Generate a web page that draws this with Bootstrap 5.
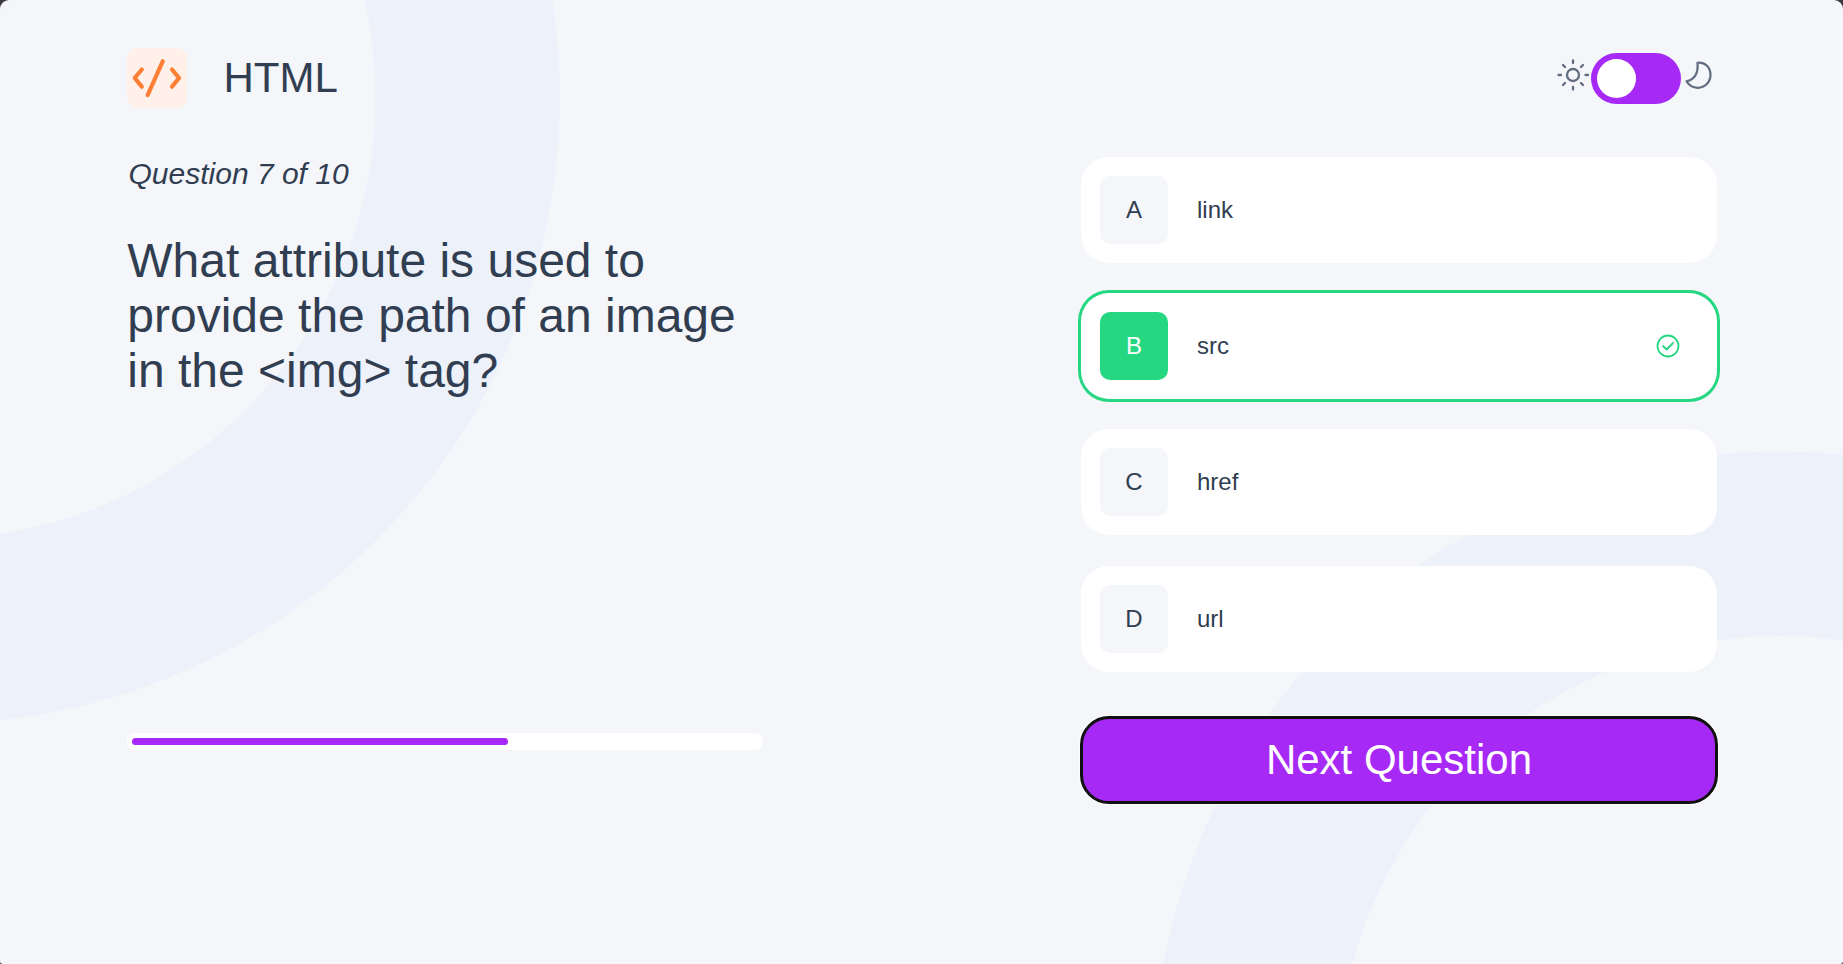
<!DOCTYPE html>
<html lang="en">
<head>
<meta charset="utf-8">
<meta name="viewport" content="width=device-width, initial-scale=1">
<title>Frontend Quiz</title>
<link rel="stylesheet" href="https://cdn.jsdelivr.net/npm/bootstrap@5.3.0/dist/css/bootstrap.min.css">
<style>
  html { background: #3b3b3f; }
  body {
    font-family: "Liberation Sans", Arial, sans-serif;
    color: #313e51;
    background: transparent;
    line-height: normal;
  }
  .quiz-page { height: 100vh; padding-left: 1px; background: #f4f6fa; border-radius: 9px 9px 3px 3px; }
  .rings { z-index: 0; }
  .quiz-shell { width: 1590px; z-index: 1; }
  .quiz-header { height: 157px; padding: 48px 1px 0 0; }
  .topic-icon { width: 60px; height: 60px; border-radius: 10px; background: #fff1e9; }
  .topic-name { font-size: 42px; line-height: 48px; margin-left: 36.5px; }
  .theme-switch { padding-top: 5px; }
  .switch-track { width: 90px; height: 51px; border-radius: 26px; background: #a729f5; padding: 6px; }
  .switch-thumb { width: 39px; height: 39px; }
  .panel { width: 636px; }
  .counter { font-size: 30px; line-height: 34px; padding-left: 1.5px; }
  .question { font-size: 48px; line-height: 55px; margin-top: 42px; padding-left: .3px; }
  .meter { height: 17px; border-radius: 8px; padding: 5px; margin-top: 335px; }
  .meter-fill { height: 7px; border-radius: 4px; background: #a729f5; }
  .options { gap: 30.2px; }
  .option { height: 106px; border-radius: 28px; padding: 0 37px 0 19px; border: 0; font-size: 24px; color: #313e51; }
  .option.correct { box-shadow: 0 0 0 3px #26d782; }
  .letter { width: 68px; height: 68px; border-radius: 10px; background: #f4f6fa; margin-right: 29px; }
  .correct .letter { background: #26d782; color: #fff; }
  .next-btn, .next-btn:hover {
    height: 86px; margin-top: 45.4px; border-radius: 28px; border: 0;
    font-size: 42px; line-height: 48px; color: #fff; background: #a729f5;
    outline: 3px solid #101010; outline-offset: -2px; box-shadow: 0 0 0 2px #fff;
  }
</style>
</head>
<body>
<div class="quiz-page position-relative overflow-hidden">
  <svg class="rings position-absolute top-0 start-0 w-100 h-100" fill="none" stroke="#ecf1fa" stroke-width="184.5" aria-hidden="true">
    <circle cx="-66.5" cy="97" r="534.2"/>
    <circle cx="1779.5" cy="1078" r="534.2"/>
  </svg>
  <div class="quiz-shell position-relative mx-auto">
    <header class="quiz-header d-flex justify-content-between align-items-start">
      <div class="d-flex align-items-center">
        <span class="topic-icon d-flex">
          <svg width="60" height="60" viewBox="0 0 60 60" fill="none" stroke="#ff7e35" stroke-width="4.2" stroke-linecap="round" stroke-linejoin="round" aria-hidden="true">
            <path d="M14.800 21.500 7.700 30l7.100 8.700M45 21.500l7.100 8.500-7.100 8.700M35.700 13.300 20.700 47"/>
          </svg>
        </span>
        <span class="topic-name">HTML</span>
      </div>
      <div class="theme-switch d-flex align-items-start">
        <svg width="34" height="51" viewBox="0 0 34 51" fill="none" stroke="#626c7f" stroke-width="2.3" stroke-linecap="round" aria-hidden="true">
          <circle cx="16" cy="22" r="6"/>
          <path d="M16 7.500V10M16 34v2.500M1.500 22H4M28.500 22H31M6 12l2 2M24 30l2 2M26 12l-2 2M8 30l-2 2"/>
        </svg>
        <div class="switch-track" role="switch" aria-checked="false"><div class="switch-thumb rounded-circle bg-white"></div></div>
        <svg width="35" height="51" viewBox="0 0 35 51" fill="none" stroke="#626c7f" stroke-width="2.2" stroke-linejoin="round" aria-hidden="true">
          <path d="M16.500 9.800C24.500 9 29.500 14.500 29.500 22A12.800 12.800 0 0 1 16.800 34.800C12.500 34.800 8 32.500 5.500 28.300C13 26.500 17.500 20.500 16.500 9.800Z"/>
        </svg>
      </div>
    </header>
    <main class="d-flex justify-content-between align-items-start">
      <section class="panel">
        <p class="counter fst-italic mb-0">Question 7 of 10</p>
        <h1 class="question fw-normal mb-0">What attribute is used to provide the path of an image in the &lt;img&gt; tag?</h1>
        <div class="meter bg-white"><div class="meter-fill" style="width:60%"></div></div>
      </section>
      <section class="panel d-flex flex-column">
        <div class="options d-flex flex-column">
          <button class="option bg-white d-flex align-items-center w-100"><span class="letter d-flex align-items-center justify-content-center">A</span>link</button>
          <button class="option correct bg-white d-flex align-items-center w-100"><span class="letter d-flex align-items-center justify-content-center">B</span>src
            <svg class="ms-auto" width="24" height="24" viewBox="0 0 24 24" fill="none" stroke="#26d782" stroke-width="1.800" stroke-linecap="round" stroke-linejoin="round" aria-hidden="true"><circle cx="12" cy="12" r="10.500"/><path d="M7 12l3.700 3.500L17 9"/></svg>
          </button>
          <button class="option bg-white d-flex align-items-center w-100"><span class="letter d-flex align-items-center justify-content-center">C</span>href</button>
          <button class="option bg-white d-flex align-items-center w-100"><span class="letter d-flex align-items-center justify-content-center">D</span>url</button>
        </div>
        <button class="next-btn btn w-100">Next Question</button>
      </section>
    </main>
  </div>
</div>
<script src="https://cdn.jsdelivr.net/npm/bootstrap@5.3.0/dist/js/bootstrap.bundle.min.js"></script>
</body>
</html>
